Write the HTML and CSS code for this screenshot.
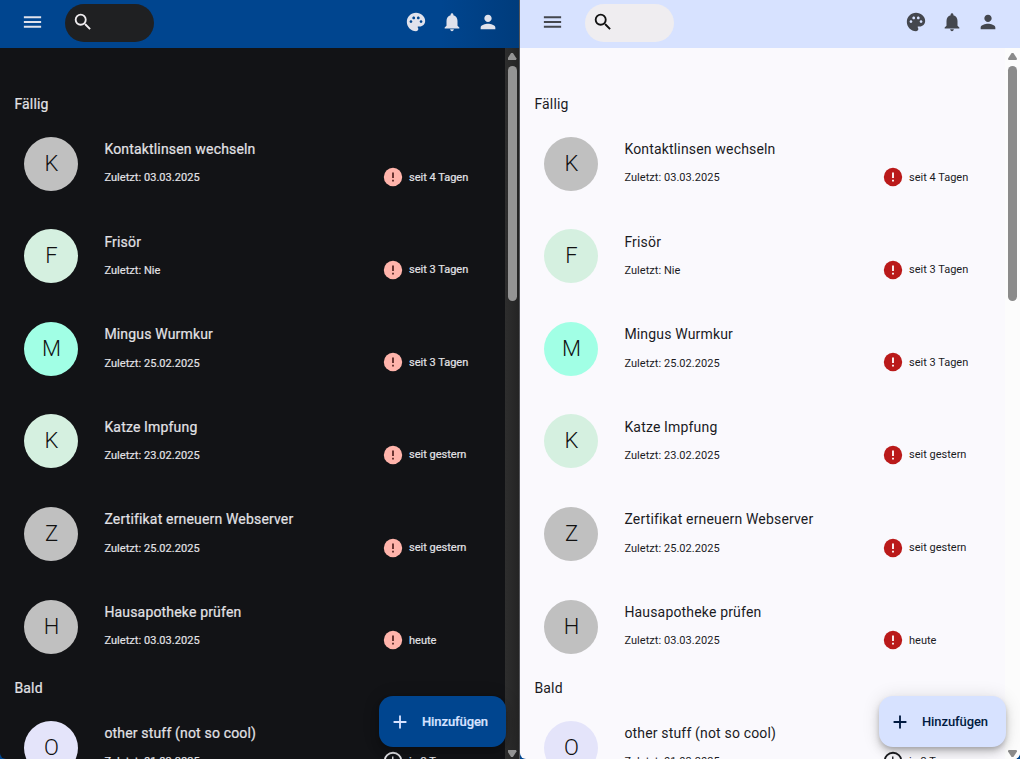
FILE: index.html
```
<!DOCTYPE html>
<html lang="de">
<head>
<meta charset="utf-8">
<title>Aufgaben</title>
<link rel="stylesheet" href="styles.css">
</head>
<body>
<svg width="0" height="0" class="defs">
  <symbol id="menu" viewBox="0 0 24 24"><path d="M3 18h18v-2H3zm0-5h18v-2H3zm0-7v2h18V6z"/></symbol>
  <symbol id="search" viewBox="0 0 24 24"><path d="M15.5 14h-.79l-.28-.27A6.47 6.47 0 0 0 16 9.5 6.5 6.5 0 1 0 9.5 16c1.61 0 3.09-.59 4.23-1.57l.27.28v.79l5 4.99L20.49 19zm-6 0C7.01 14 5 11.99 5 9.5S7.01 5 9.5 5 14 7.01 14 9.5 11.99 14 9.5 14"/></symbol>
  <symbol id="palette" viewBox="0 0 24 24"><path d="M12 2C6.49 2 2 6.49 2 12s4.49 10 10 10c1.38 0 2.5-1.12 2.5-2.5 0-.61-.23-1.2-.64-1.67-.08-.1-.13-.21-.13-.33 0-.28.22-.5.5-.5H16c3.31 0 6-2.69 6-6 0-4.96-4.49-9-10-9m5.5 11c-.83 0-1.5-.67-1.5-1.5s.67-1.5 1.5-1.5 1.5.67 1.5 1.5-.67 1.5-1.5 1.5m-3-4c-.83 0-1.5-.67-1.5-1.5S13.67 6 14.500 6s1.5.67 1.5 1.500S15.330 9 14.500 9M5 11.500c0-.83.67-1.500 1.500-1.500s1.500.67 1.500 1.500S7.330 13 6.500 13 5 12.330 5 11.500m6-4c0 .83-.67 1.500-1.500 1.500S8 8.330 8 7.500 8.670 6 9.500 6s1.500.67 1.500 1.500"/></symbol>
  <symbol id="bell" viewBox="0 0 24 24"><path d="M12 22c1.100 0 2-.9 2-2h-4c0 1.100.89 2 2 2m6-6v-5c0-3.070-1.640-5.640-4.500-6.320V4c0-.83-.67-1.500-1.500-1.500s-1.500.67-1.500 1.500v.68C7.630 5.360 6 7.920 6 11v5l-2 2v1h16v-1z"/></symbol>
  <symbol id="person" viewBox="0 0 24 24"><path d="M12 12c2.210 0 4-1.790 4-4s-1.790-4-4-4-4 1.790-4 4 1.790 4 4 4m0 2c-2.670 0-8 1.340-8 4v2h16v-2c0-2.660-5.330-4-8-4"/></symbol>
  <symbol id="error" viewBox="0 0 24 24"><circle cx="12" cy="12" r="10"/><path class="mark" d="M11 7h2v6h-2zm0 8h2v2h-2z"/></symbol>
  <symbol id="clock" viewBox="0 0 24 24"><path d="M12 2a10 10 0 1 0 0 20 10 10 0 0 0 0-20m0 18a8 8 0 1 1 0-16 8 8 0 0 1 0 16m.5-13H11v6l5.200 3.200.8-1.300-4.500-2.700z"/></symbol>
  <symbol id="plus" viewBox="0 0 24 24"><path d="M19 13h-6v6h-2v-6H5v-2h6V5h2v6h6z"/></symbol>
</svg>
<main class="screen">
  <section class="app dark"></section>
  <section class="app light"></section>
</main>
<template id="app">
  <header class="bar">
    <svg class="icon menu"><use href="#menu"/></svg>
    <div class="search"><svg class="icon"><use href="#search"/></svg></div>
    <nav class="actions">
      <svg class="icon"><use href="#palette"/></svg>
      <svg class="icon"><use href="#bell"/></svg>
      <svg class="icon"><use href="#person"/></svg>
    </nav>
  </header>
  <div class="body">
    <div class="list"></div>
    <div class="track"><i class="up"></i><i class="thumb"></i><i class="down"></i></div>
  </div>
  <button class="fab"><svg class="icon"><use href="#plus"/></svg><span>Hinzufügen</span></button>
</template>
<script src="app.js"></script>
</body>
</html>
```
FILE: app.js
```
const groups = [
  ['Fällig', [
    ['K', 'gray', 'Kontaktlinsen wechseln', '03.03.2025', 'seit 4 Tagen'],
    ['F', 'mint', 'Frisör', 'Nie', 'seit 3 Tagen'],
    ['M', 'aqua', 'Mingus Wurmkur', '25.02.2025', 'seit 3 Tagen'],
    ['K', 'mint', 'Katze Impfung', '23.02.2025', 'seit gestern'],
    ['Z', 'gray', 'Zertifikat erneuern Webserver', '25.02.2025', 'seit gestern'],
    ['H', 'gray', 'Hausapotheke prüfen', '03.03.2025', 'heute']
  ], 'error'],
  ['Bald', [
    ['O', 'lilac', 'other stuff (not so cool)', '01.03.2025', 'in 3 Tagen']
  ], 'clock']
];

const row = ([letter, color, name, last, due], icon) => `
  <article class="row">
    <div class="avatar ${color}">${letter}</div>
    <div class="text"><div class="name">${name}</div><div class="last">Zuletzt: ${last}</div></div>
    <div class="due"><svg class="state ${icon}"><use href="#${icon}"/></svg><span>${due}</span></div>
  </article>`;

const html = groups.map(([title, items, icon]) =>
  `<h2 class="group">${title}</h2>${items.map(i => row(i, icon)).join('')}`).join('');

document.querySelectorAll('.app').forEach(app => {
  app.append(document.getElementById('app').content.cloneNode(true));
  app.querySelector('.list').innerHTML = html;
});
```
FILE: styles.css
```
* { box-sizing: border-box; }
body { margin: 0; overflow: hidden; font-family: Roboto, sans-serif; }
.defs { position: absolute; }
.screen { display: grid; grid-template-columns: 520px 500px; height: 759px; background: #00468f; }
.app { position: relative; display: flex; flex-direction: column; height: 759px; min-width: 0; overflow: hidden; background: var(--bg); color: var(--fg); }
.dark {
  --bg: #121316; --fg: #e2e2e6; --bar: #00458f; --bar-icon: #e0e2ec; --search: #1f2022; --search-icon: #f0edf0;
  --error: #ffb4ab; --mark: #5c2a27; --fab: #00458f; --fab-fg: #d7e2ff; --track: #2b2b2b; --thumb: #949494;
  border-right: 1px solid #55565a; border-radius: 0 0 0 6px;
  -webkit-text-stroke: .2px;
}
.light {
  --bg: #faf9fd; --fg: #1a1b1f; --bar: #d7e2ff; --bar-icon: #44474e; --search: #efedf0; --search-icon: #111;
  --error: #ba1a1a; --mark: #fff; --fab: #d7e2ff; --fab-fg: #001a40; --track: #fcfcfc; --thumb: #8b8b8b;
  border-radius: 0 0 6px 6px;
}
.bar { flex: none; height: 48px; display: flex; align-items: center; padding: 0 21px 4px; background: var(--bar); color: var(--bar-icon); }
.dark .bar { background: linear-gradient(90deg, #00458f 85%, #003c7c); padding-right: 20px; }
.icon { width: 22px; height: 22px; flex: none; fill: currentColor; }
.bar .menu { width: 23px; height: 24px; }
.search { width: 89px; height: 38px; margin: 4px 0 0 21px; padding: 7px; border-radius: 19px; background: var(--search); color: var(--search-icon); align-self: flex-start; }
.search .icon { display: block; }
.actions { display: flex; gap: 14px; margin-left: auto; }
.body { flex: 1; min-height: 0; display: flex; }
.list { flex: 1; min-width: 0; padding-top: 41px; overflow: hidden; }
.group { margin: 0; height: 28.4px; padding-left: 14.400px; font-size: 14px; font-weight: 400; line-height: 31px; letter-spacing: .17px; }
.row { height: 92.6px; display: flex; align-items: center; padding: 0 37px 0 24px; }
.avatar { flex: none; width: 54px; height: 54px; border-radius: 50%; color: #111; font-size: 22px; font-weight: 300; line-height: 53px; text-align: center; padding-left: 1px; -webkit-text-stroke: 0; }
.gray { background: #c0c0c0; }
.mint { background: #d5f0e0; }
.aqua { background: #a1ffe5; }
.lilac { background: #e4e4fa; }
.text { flex: 1; margin-left: 26.400px; padding-bottom: 2px; }
.name { font-size: 14px; line-height: 20px; letter-spacing: .17px; }
.last { margin-top: 11.400px; font-size: 11px; line-height: 16px; letter-spacing: .05px; }
.due { width: 86px; display: flex; align-items: center; gap: 5px; margin-top: 27px; font-size: 11px; white-space: nowrap; }
.state { width: 22px; height: 22px; flex: none; fill: currentColor; }
.state.error { fill: var(--error); }
.mark { fill: var(--mark); }
.track { width: 15px; display: flex; flex-direction: column; align-items: center; background: var(--track); }
.dark .track { width: 14px; background: linear-gradient(90deg, #2e2e2e, #242424); }
.up, .down { width: 9px; height: 7px; background: var(--thumb); clip-path: polygon(40% 0, 60% 0, 100% 80%, 95% 100%, 5% 100%, 0 80%); }
.up { margin-top: 5px; }
.thumb { width: 9px; height: 235px; margin-top: 6px; border-radius: 5px; background: var(--thumb); }
.down { margin-top: auto; margin-bottom: 2px; transform: scaleY(-1); }
.fab { position: absolute; right: 13px; bottom: 12px; width: 127px; height: 51px; border: 0; border-radius: 14px; display: flex; align-items: center; gap: 11px; padding: 0 0 0 10px; background: var(--fab); color: var(--fab-fg); font: 500 13px Roboto, sans-serif; letter-spacing: -.1px; box-shadow: 0 3px 5px -1px #0003, 0 6px 10px #00000024, 0 1px 18px #0000001f; }
.light .fab { right: 14px; }
```
